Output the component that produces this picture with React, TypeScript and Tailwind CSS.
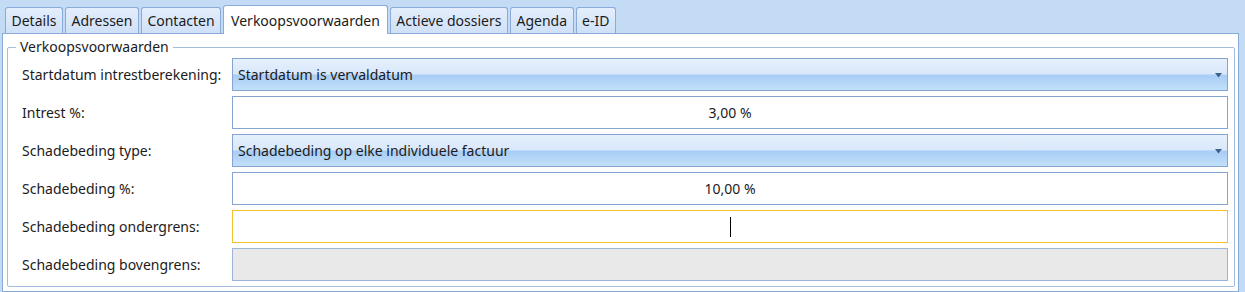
const tabs = ['Details', 'Adressen', 'Contacten', 'Verkoopsvoorwaarden', 'Actieve dossiers', 'Agenda', 'e-ID']

function Combo({ value }: { value: string }) {
    return (
        <div className="relative flex h-[33px] items-center border border-[#86a4d2] bg-[linear-gradient(to_bottom,#e6f0fd_0%,#d9e8fb_48%,#a8ccf4_52%,#c2e0fb_100%)] pl-[5px]">
            <span>{value}</span>
            <svg className="absolute top-[14px] right-[5px]" width="7" height="5" viewBox="0 0 7 5">
                <path d="M0 0h7L3.5 4.5z" fill="#3f5f8e" />
            </svg>
        </div>
    )
}

const boxStyles = {
    normal: 'flex h-[33px] items-center justify-center border border-[#86a4d2] bg-white',
    focused: 'flex h-[33px] items-center justify-center border border-[#f4c030] bg-white',
    disabled: 'flex h-[33px] items-center justify-center border border-[#9db3d8] bg-[#e9e9e9]',
}

function TextBox({ value, kind = 'normal' }: { value?: string; kind?: 'normal' | 'focused' | 'disabled' }) {
    return (
        <div className={boxStyles[kind]}>
            {value}
            {kind === 'focused' && <div className="h-[20px] w-px bg-black" />}
        </div>
    )
}

export default function App() {
    const rows = [
        { label: 'Startdatum intrestberekening:', field: <Combo value="Startdatum is vervaldatum" /> },
        { label: 'Intrest %:', field: <TextBox value="3,00 %" /> },
        { label: 'Schadebeding type:', field: <Combo value="Schadebeding op elke individuele factuur" /> },
        { label: 'Schadebeding %:', field: <TextBox value="10,00 %" /> },
        { label: 'Schadebeding ondergrens:', field: <TextBox kind="focused" /> },
        { label: 'Schadebeding bovengrens:', field: <TextBox kind="disabled" /> },
    ]

    return (
        <div className="h-[292px] w-[1245px] overflow-hidden bg-[#c4dbf6] font-['Noto_Sans',sans-serif] text-[14px] text-[#1b1b1b]">
            <div className="flex h-[33px] items-end pl-[5px]">
                {tabs.map((t) => {
                    const active = t === 'Verkoopsvoorwaarden'
                    return (
                        <div
                            key={t}
                            className={
                                active
                                    ? 'relative z-10 mr-[2px] -mb-px flex h-[29px] items-center rounded-t-[3px] border border-b-0 border-[#8aaad8] bg-white px-[7px]'
                                    : 'mr-[2px] flex h-[26px] items-center rounded-t-[3px] border border-b-0 border-[#8aaad8] bg-[linear-gradient(to_bottom,#e4eefc,#cfe0f7)] px-[5.5px]'
                            }
                        >
                            {t}
                        </div>
                    )
                })}
            </div>
            <div className="ml-[2px] h-[259px] w-[1237px] border border-[#8aaad8] bg-white pt-[5px] pr-[3px] pl-[4px] shadow-[-2px_0_0_0_#c4dbf6,-3px_0_0_0_#8aaad8]">
                <fieldset className="h-[248px] rounded-[2px] border border-[#a6bde0]">
                    <legend className="ml-[8px] px-[4px] leading-[16px]">Verkoopsvoorwaarden</legend>
                    <div className="mt-[3px] flex flex-col gap-[5px] pr-[6px] pl-[14px]">
                        {rows.map((r) => (
                            <div key={r.label} className="grid grid-cols-[210px_1fr] items-center">
                                <span>{r.label}</span>
                                {r.field}
                            </div>
                        ))}
                    </div>
                </fieldset>
            </div>
        </div>
    )
}
